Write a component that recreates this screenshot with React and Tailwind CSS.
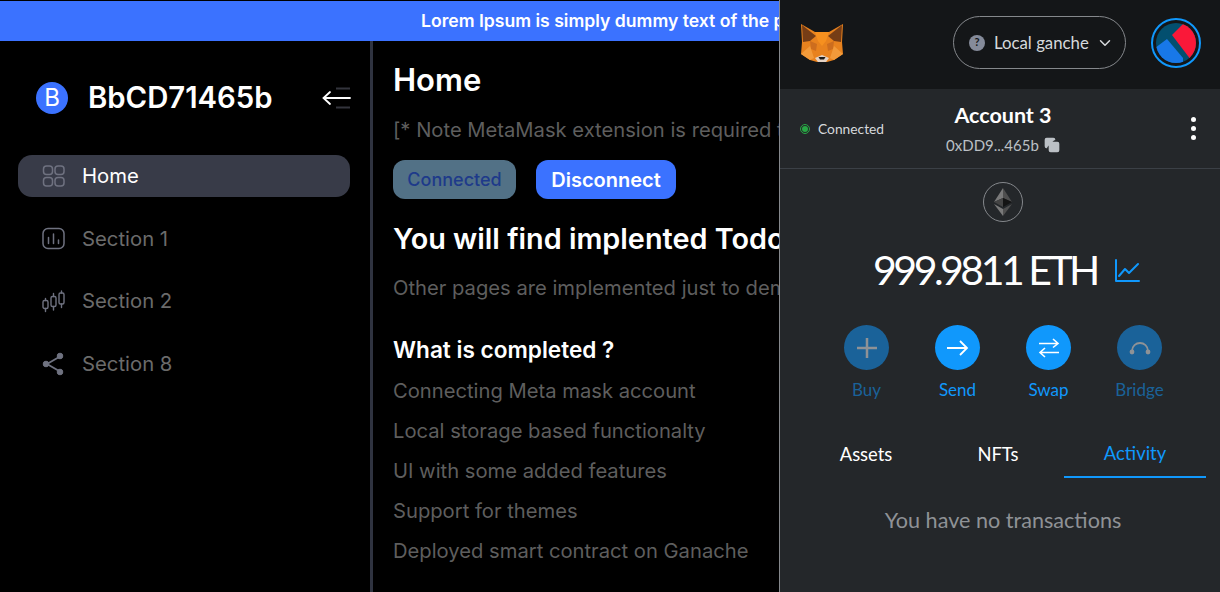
import { ChevronDown, Copy } from "lucide-react";

const inter = "font-['Inter',sans-serif]";

const completed = [
  "Connecting Meta mask account",
  "Local storage based functionalty",
  "UI with some added features",
  "Support for themes",
  "Deployed smart contract on Ganache",
];

function HomeIcon() {
  return (
    <svg width="24" height="24" viewBox="0 0 24 24" fill="none" stroke="#6f7280" strokeWidth="1.5">
      <rect x="1.5" y="2" width="9" height="8.5" rx="3" />
      <rect x="13" y="2" width="9" height="8.5" rx="3" />
      <rect x="1.5" y="13.5" width="9" height="8.5" rx="3" />
      <rect x="13" y="13.5" width="9" height="8.5" rx="3" />
    </svg>
  );
}

function ChartIcon() {
  return (
    <svg width="24" height="24" viewBox="0 0 24 24" fill="none" stroke="#6f7280" strokeWidth="1.5" strokeLinecap="round">
      <rect x="1" y="1.5" width="21" height="20" rx="5" />
      <path d="M6.5 10.5v6M11.5 7v9.5M16.5 13v3.5" />
    </svg>
  );
}

function CandleIcon() {
  return (
    <svg width="24" height="24" viewBox="0 0 24 24" fill="none" stroke="#6f7280" strokeWidth="1.4" strokeLinecap="round">
      <rect x="1" y="10.5" width="5" height="8" rx="1.5" />
      <path d="M3.5 8.5v2M3.5 18.5v3" />
      <rect x="9" y="6.5" width="5" height="10" rx="1.5" />
      <path d="M11.5 3.5v3M11.5 16.5v3.5" />
      <rect x="17" y="3" width="5" height="11" rx="1.5" />
      <path d="M19.5 1v2M19.5 14v3.5" />
    </svg>
  );
}

function ShareIcon() {
  return (
    <svg width="24" height="24" viewBox="0 0 24 24" fill="#6f7280" stroke="#6f7280">
      <path d="M18 4.5 5 12l13 7.5" fill="none" strokeWidth="1.8" />
      <circle cx="18" cy="4" r="2.8" />
      <circle cx="4" cy="12" r="2.8" />
      <circle cx="18" cy="20" r="2.8" />
    </svg>
  );
}

function CollapseIcon() {
  return (
    <svg width="30" height="24" viewBox="0 0 30 24" fill="none" strokeWidth="1.8">
      <path d="M15 2.5h14M15 21.5h14" stroke="#33343c" />
      <path d="M29 12H3M9 6 2.5 12 9 18" stroke="#ffffff" strokeLinecap="round" />
    </svg>
  );
}

function NavItem({ icon, label, active }) {
  return (
    <div
      className={`flex h-[42px] items-center gap-[16px] rounded-[14px] pl-[24px] text-[20.3px] ${
        active ? "bg-[#383b48] text-white" : "text-[#6b6b6b]"
      }`}
    >
      {icon}
      <span>{label}</span>
    </div>
  );
}

function Fox() {
  return (
    <svg width="42" height="38" viewBox="0 0 42 38">
      <path d="M0 0 14 8H28L42 0 41 18 42 30 33 36 26 38H16L9 36 0 30 1 18Z" fill="#e8821e" />
      <path d="M1 1 15 12 9 17 2 18Z" fill="#763d16" />
      <path d="M41 1 27 12 33 17 40 18Z" fill="#763d16" />
      <path d="M14 8H28L25 17 21 22 17 17Z" fill="#f6901f" />
      <path d="M9 17 16 20 15 27 10 25Z" fill="#cd6d1e" />
      <path d="M33 17 26 20 27 27 32 25Z" fill="#cd6d1e" />
      <path d="M0 30 9 22 13 34 9 36Z" fill="#f29a3a" />
      <path d="M42 30 33 22 29 34 33 36Z" fill="#f29a3a" />
      <path d="M14 34 21 31 28 34 25 38H17Z" fill="#e4d3c5" />
      <path d="M17.5 33H24.5L23 35.5H19Z" fill="#1d1a18" />
    </svg>
  );
}

function Avatar() {
  return (
    <div className="flex h-[50px] w-[50px] items-center justify-center rounded-full border-[2px] border-[#1098fc]">
      <svg width="42" height="42" viewBox="0 0 42 42">
        <clipPath id="avatar-clip">
          <circle cx="21" cy="21" r="20" />
        </clipPath>
        <g clipPath="url(#avatar-clip)">
          <rect width="42" height="42" fill="#034f6f" />
          <path d="M17 13 30 0H44V30L36 38Z" fill="#fa1839" />
          <path d="M0 26 12 17 28 36V44H0Z" fill="#1878e8" />
        </g>
      </svg>
    </div>
  );
}

function EthLogo() {
  return (
    <div className="flex h-[40px] w-[40px] items-center justify-center rounded-full border border-[#85888c]">
      <svg width="18" height="28" viewBox="0 0 18 28">
        <path d="M9 0 0 14l9-4z" fill="#7a7a7a" />
        <path d="M9 0l9 14-9-4z" fill="#4f4f4f" />
        <path d="M9 10 0 14l9 5z" fill="#444" />
        <path d="M9 10l9 4-9 5z" fill="#141414" />
        <path d="M0 16l9 12v-7z" fill="#7a7a7a" />
        <path d="M18 16 9 28v-7z" fill="#4f4f4f" />
      </svg>
    </div>
  );
}

function WalletAction({ label, disabled, children }) {
  return (
    <div className="flex w-[91px] flex-col items-center gap-[11px]">
      <div
        className={`flex h-[45px] w-[45px] items-center justify-center rounded-full ${
          disabled ? "bg-[#1a6299]" : "bg-[#1098fc]"
        }`}
      >
        {children}
      </div>
      <span className={`text-[17px] leading-[18px] ${disabled ? "text-[#1a6299]" : "text-[#1098fc]"}`}>{label}</span>
    </div>
  );
}

function WalletPopup() {
  return (
    <div className="absolute bottom-0 left-[779px] right-0 top-0 flex flex-col border-l border-[#85888c] bg-[#24272a] font-['Lato',sans-serif]">
      <div className="flex h-[89px] items-center bg-[#141618] pb-[4px] pl-[21px] pr-[19px]">
        <Fox />
        <div className="ml-[110px] flex h-[53px] w-[173px] items-center rounded-full border border-[#85888c] pl-[15px] text-[16.8px] text-[#d6d9dc]">
          <span className="flex h-[16px] w-[16px] items-center justify-center rounded-full bg-[#858b9a] text-[11px] font-bold text-[#141618]">
            ?
          </span>
          <span className="ml-[9px]">Local ganche</span>
          <ChevronDown className="ml-[7px] text-[#d6d9dc]" size={18} />
        </div>
        <div className="ml-auto">
          <Avatar />
        </div>
      </div>

      <div className="flex h-[80px] items-center border-b border-[#3b4046] pl-[20px] pr-[24px]">
        <div className="flex w-[100px] items-center gap-[8px] pt-[1px] text-[13.8px] text-[#d6d9dc]">
          <span className="flex h-[10px] w-[10px] items-center justify-center rounded-full border border-[#28a745]">
            <span className="h-[6px] w-[6px] rounded-full bg-[#28a745]" />
          </span>
          Connected
        </div>
        <div className="ml-[11px] flex w-[184px] flex-col items-center pb-[2px]">
          <span className="text-[21.5px] font-bold leading-[26px] text-white">Account 3</span>
          <span className="mt-[8px] flex items-center gap-[5px] text-[15px] leading-[18px] text-[#bbc0c5]">
            0xDD9...465b
            <Copy size={16} fill="#bbc0c5" color="#bbc0c5" />
          </span>
        </div>
        <div className="ml-auto flex flex-col gap-[4px]">
          <span className="h-[5px] w-[5px] rounded-full bg-white" />
          <span className="h-[5px] w-[5px] rounded-full bg-white" />
          <span className="h-[5px] w-[5px] rounded-full bg-white" />
        </div>
      </div>

      <div className="flex flex-col items-center pl-[6px] pt-[13px]">
        <EthLogo />
        <div className="ml-[8px] mt-[21px] flex h-[54px] items-center text-[41px] text-white">
          <span className="tracking-[-3.5px]">999.9811 ETH</span>
          <svg className="ml-[17px]" width="27" height="27" viewBox="0 0 27 27" fill="none" stroke="#1098fc" strokeWidth="2" strokeLinecap="round" strokeLinejoin="round">
            <path d="M2 3v21h23" />
            <path d="M5 19 11 12l4 4 9-9" />
          </svg>
        </div>
        <div className="mt-[28px] flex">
          <WalletAction label="Buy" disabled>
            <svg width="22" height="22" viewBox="0 0 22 22" stroke="#8f9296" strokeWidth="2.5">
              <path d="M11 1v20M1 11h20" />
            </svg>
          </WalletAction>
          <WalletAction label="Send">
            <svg width="22" height="18" viewBox="0 0 22 18" fill="none" stroke="#fff" strokeWidth="1.8">
              <path d="M0 9h20M13 2l7 7-7 7" />
            </svg>
          </WalletAction>
          <WalletAction label="Swap">
            <svg width="22" height="20" viewBox="0 0 22 20" fill="none" stroke="#fff" strokeWidth="1.6">
              <path d="M1 5.5h19M15 1l5 4.5-5 4M21 14.5H2M7 10l-5 4.5L7 19" />
            </svg>
          </WalletAction>
          <WalletAction label="Bridge" disabled>
            <svg width="22" height="14" viewBox="0 0 22 14" fill="none" stroke="#8f9296" strokeWidth="1.8">
              <path d="M3 10C3 5 7 2 11 2s8 3 8 8" />
              <circle cx="3" cy="11" r="2.4" fill="#8f9296" stroke="none" />
              <circle cx="19" cy="11" r="2.4" fill="#8f9296" stroke="none" />
            </svg>
          </WalletAction>
        </div>
      </div>

      <div className="ml-[20px] mr-[14px] mt-[33px] flex h-[46px] text-[18.4px]">
        <div className="flex w-[132px] items-center justify-center text-white">Assets</div>
        <div className="flex w-[132px] items-center justify-center text-white">NFTs</div>
        <div className="flex flex-1 items-center justify-center border-b-[2px] border-[#1098fc] text-[#1098fc]">
          Activity
        </div>
      </div>
      <p className="mt-[26px] pl-[6px] text-center text-[21.6px] text-[#8f9296]">You have no transactions</p>
    </div>
  );
}

export default function App() {
  return (
    <div className={`relative h-[592px] w-[1220px] overflow-hidden bg-black ${inter}`}>
      <div className="mt-px flex h-[40px] items-center bg-[#3b72ff] pl-[421px] text-[17.6px] font-semibold whitespace-nowrap text-white">
        Lorem Ipsum is simply dummy text of the printing
      </div>

      <div className="flex h-[551px]">
        <aside className="w-[373px] shrink-0 border-r-[3px] border-[#2f3340] pl-[18px] pr-[20px]">
          <div className="flex items-center pl-[18px] pt-[41px]">
            <span className="flex h-[32px] w-[32px] items-center justify-center rounded-full bg-[#3b72ff] text-[24px] leading-none text-white">
              B
            </span>
            <span className="ml-[20px] text-[29.3px] font-semibold leading-[32px] text-white">BbCD71465b</span>
            <span className="ml-auto mr-[-1px]">
              <CollapseIcon />
            </span>
          </div>
          <nav className="mt-[41px] flex flex-col gap-[20.75px]">
            <NavItem icon={<HomeIcon />} label="Home" active />
            <NavItem icon={<ChartIcon />} label="Section 1" />
            <NavItem icon={<CandleIcon />} label="Section 2" />
            <NavItem icon={<ShareIcon />} label="Section 8" />
          </nav>
        </aside>

        <main className="min-w-0 flex-1 overflow-hidden pl-[20px] pt-[20px] whitespace-nowrap">
          <h1 className="text-[31px] font-semibold leading-[38px] text-white">Home</h1>
          <p className="mt-[17px] text-[20.2px] leading-[28px] text-[#5e5e5e]">[* Note MetaMask extension is required to use this app]</p>
          <div className="mt-[16px] flex gap-[20px]">
            <button className="h-[39px] w-[123px] rounded-[12px] bg-[#527186] text-[18px] font-medium text-[#1e3a8a]">Connected</button>
            <button className="h-[39px] w-[140px] rounded-[12px] bg-[#3b72ff] text-[20px] font-semibold text-white">Disconnect</button>
          </div>
          <h2 className="mt-[20px] text-[28.8px] font-semibold leading-[40px] text-white">You will find implented Todo app in Section</h2>
          <p className="mt-[15px] text-[20.2px] leading-[28px] text-[#5e5e5e]">Other pages are implemented just to demonstrate the UI</p>
          <h3 className="mt-[33px] text-[22.6px] font-semibold leading-[30px] text-white">What is completed ?</h3>
          <ul className="mt-[6px]">
            {completed.map((item) => (
              <li key={item} className="h-[40px] text-[20.2px] leading-[40px] text-[#5e5e5e]">
                {item}
              </li>
            ))}
          </ul>
        </main>
      </div>

      <WalletPopup />
    </div>
  );
}
